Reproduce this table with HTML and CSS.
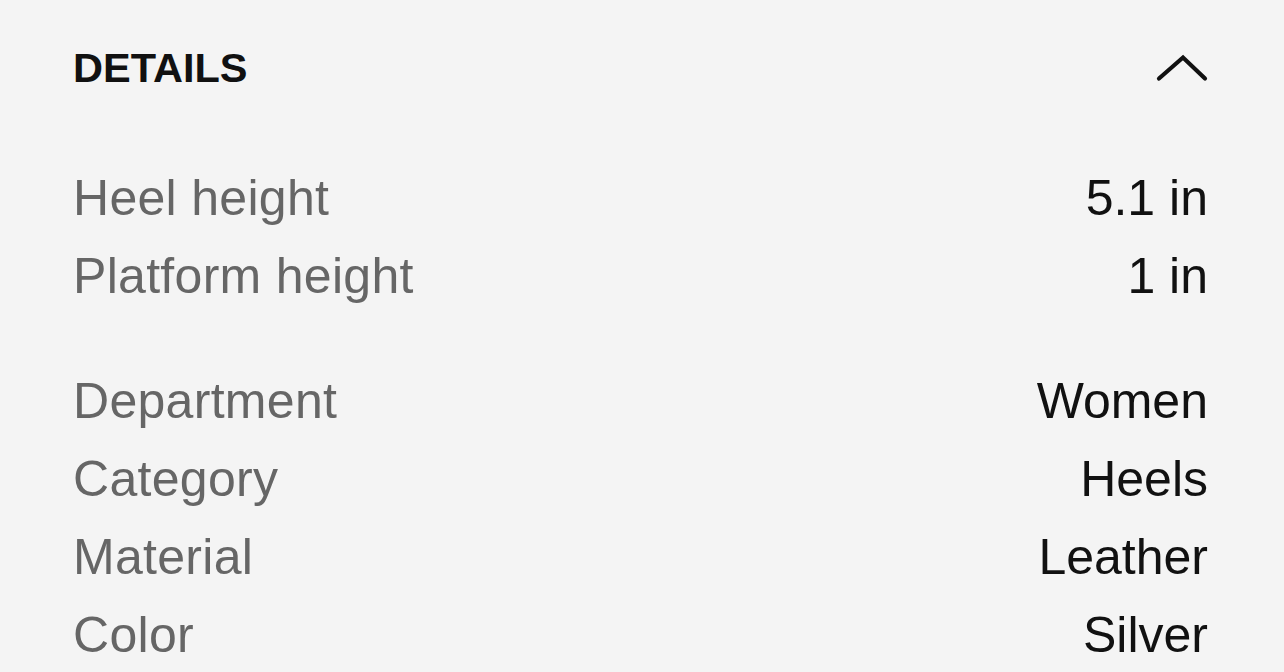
FILE: index.html
```html
<!DOCTYPE html>
<html lang="en">
<head>
<meta charset="utf-8">
<title>Details</title>
<link rel="stylesheet" href="styles.css">
</head>
<body>
<section class="panel">
  <div class="header">
    <h2 class="title">DETAILS</h2>
    <svg class="chevron" width="58" height="32" viewBox="0 0 58 32" aria-hidden="true">
      <path d="M9 26.5 L33 5.5 L55 26.5" fill="none" stroke="#111" stroke-width="4.2" stroke-linecap="round" stroke-linejoin="miter"/>
    </svg>
  </div>
  <dl class="group first">
    <div class="row"><dt>Heel height</dt><dd>5.1 in</dd></div>
    <div class="row"><dt>Platform height</dt><dd>1 in</dd></div>
  </dl>
  <dl class="group">
    <div class="row"><dt>Department</dt><dd>Women</dd></div>
    <div class="row"><dt>Category</dt><dd>Heels</dd></div>
    <div class="row"><dt>Material</dt><dd>Leather</dd></div>
    <div class="row"><dt>Color</dt><dd>Silver</dd></div>
  </dl>
</section>
</body>
</html>
```
FILE: styles.css
```css
html, body {
  margin: 0;
  padding: 0;
  background: #f4f4f4;
  font-family: "Liberation Sans", Arial, sans-serif;
}
.panel {
  padding: 43px 76px 0 73px;
}
.header {
  display: flex;
  justify-content: space-between;
  align-items: center;
  height: 50px;
}
.title {
  margin: 0;
  font-size: 41.5px;
  font-weight: 700;
  line-height: 50px;
  color: #111;
}
.chevron {
  display: block;
  overflow: visible;
}
.group {
  margin: 47px 0 0 0;
}
.group.first {
  margin-top: 66px;
}
.row {
  display: flex;
  justify-content: space-between;
  font-size: 50px;
  line-height: 78px;
}
.row dt {
  color: #666;
  letter-spacing: 0.3px;
}
.row dd {
  margin: 0;
  color: #111;
}
```
